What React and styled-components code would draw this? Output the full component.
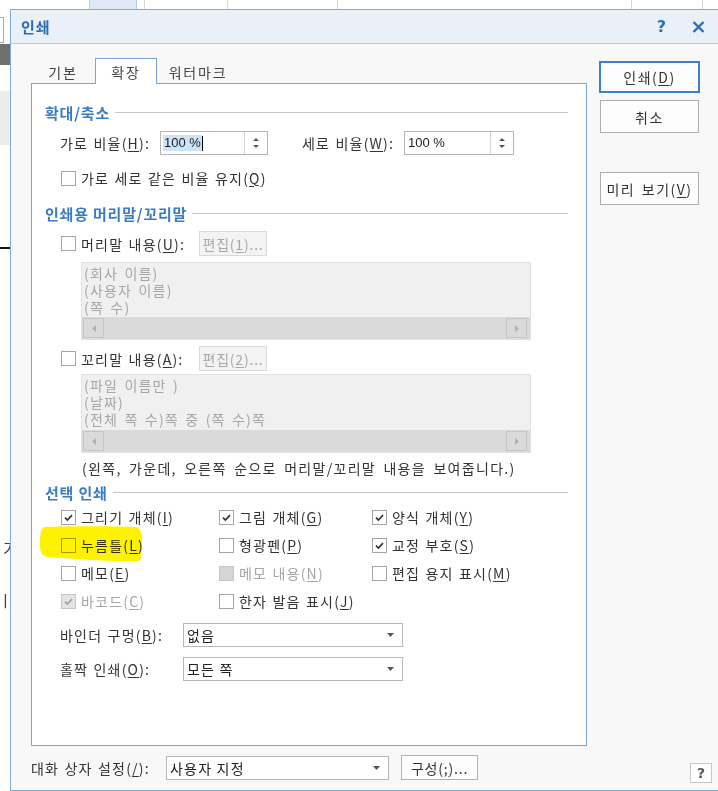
import React from 'react';
import styled, { createGlobalStyle } from 'styled-components';

const GlobalStyle = createGlobalStyle`
  html, body { margin: 0; padding: 0; background: #fff; }
  body {
    overflow: hidden;
    font-family: "Noto Sans CJK KR", "Noto Sans", sans-serif;
    color: #333;
  }
`;

const Desktop = styled.div`
  width: 718px;
  height: 791px;
  overflow: hidden;
  display: flex;
  flex-direction: column;
  background: #fff;
`;

const TopStrip = styled.div`
  height: 9px;
  flex: none;
  display: flex;
`;

const StripCell = styled.div`
  width: ${(p) => p.$w}px;
  flex: none;
  box-sizing: border-box;
  background: ${(p) => p.$bg || '#fff'};
  border-right: 1px solid ${(p) => p.$line || '#d8d8d8'};
`;

const MainRow = styled.div`
  flex: 1;
  min-height: 0;
  display: flex;
`;

const LeftStrip = styled.div`
  width: 10px;
  flex: none;
  display: flex;
  flex-direction: column;
  overflow: hidden;
`;

const StripBlock = styled.div`
  flex: none;
  height: ${(p) => p.$h}px;
  margin-top: ${(p) => p.$mt || 0}px;
  width: ${(p) => p.$w || 10}px;
  box-sizing: border-box;
  background: ${(p) => p.$bg || 'transparent'};
  border: ${(p) => (p.$frame ? '1px solid #a9a9a9' : 'none')};
  border-left: none;
`;

const StripGlyph = styled.div`
  flex: none;
  margin-top: ${(p) => p.$mt}px;
  margin-left: ${(p) => p.$ml || 0}px;
  font-size: 16px;
  line-height: 18px;
  color: #444;
  white-space: nowrap;
`;

const Dialog = styled.div`
  width: 720px;
  flex: none;
  display: flex;
  flex-direction: column;
  box-sizing: border-box;
  border: 1px solid #80aad9;
  background: #f8f8f8;
`;

const TitleBar = styled.div`
  height: 34px;
  flex: none;
  box-sizing: border-box;
  display: flex;
  align-items: center;
  padding: 0 24px 0 10px;
  background: #e9f0f8;
  border-bottom: 1px solid #b6cde8;
`;

const TitleText = styled.div`
  font-size: 15px;
  font-weight: 700;
  letter-spacing: 1px;
  color: #2d6db3;
`;

const Spacer = styled.div`
  flex: 1;
`;

const HelpMark = styled.div`
  font-family: "DejaVu Sans", sans-serif;
  font-size: 16px;
  font-weight: 700;
  color: #2d6db3;
  line-height: 16px;
`;

const CloseIcon = styled.svg`
  margin-left: 26px;
`;

const Body = styled.div`
  flex: 1;
  display: flex;
  padding: 14px 0 0 20px;
`;

const LeftCol = styled.div`
  width: 556px;
  flex: none;
  display: flex;
  flex-direction: column;
`;

const TabRow = styled.div`
  height: 26px;
  display: flex;
  margin-bottom: -1px;
  position: relative;
  z-index: 1;
`;

const Tab = styled.div`
  width: ${(p) => p.$w}px;
  height: 26px;
  box-sizing: border-box;
  display: flex;
  align-items: center;
  justify-content: center;
  font-size: 14px;
  letter-spacing: 1.8px;
  color: #444;
  border: 1px solid ${(p) => (p.$active ? '#7aa6d6' : 'transparent')};
  border-bottom: none;
  background: ${(p) => (p.$active ? '#fff' : 'transparent')};
`;

const Panel = styled.div`
  height: 663px;
  box-sizing: border-box;
  border: 1px solid #7aa6d6;
  background: #fff;
  padding: 0 18px 0 13px;
  display: flex;
  flex-direction: column;
`;

const SectionHead = styled.div`
  height: 18px;
  margin-top: ${(p) => p.$mt}px;
  display: flex;
  align-items: center;
  font-size: 15px;
  font-weight: 700;
  letter-spacing: 0.8px;
  color: #3a7cc3;
  white-space: nowrap;
`;

const Rule = styled.div`
  flex: 1;
  height: 1px;
  margin-left: 5px;
  background: #c6c6c6;
`;

const Row = styled.div`
  display: flex;
  align-items: center;
  height: ${(p) => p.$h || 20}px;
  margin-top: ${(p) => p.$mt}px;
  margin-left: ${(p) => (p.$ml === undefined ? 15 : p.$ml)}px;
`;

const Label = styled.div`
  width: ${(p) => (p.$w ? `${p.$w}px` : 'auto')};
  flex: none;
  margin-left: ${(p) => p.$ml || 0}px;
  font-size: 14px;
  letter-spacing: 1.2px;
  word-spacing: 1px;
  line-height: 18px;
  white-space: nowrap;
  color: ${(p) => (p.$disabled ? '#a6a6a6' : '#333')};
`;

const Key = styled.span`
  text-decoration: underline;
  text-underline-offset: 2px;
`;

const SpinBox = styled.div`
  width: ${(p) => p.$w}px;
  height: 24px;
  box-sizing: border-box;
  border: 1px solid #b5b5b5;
  background: #fff;
  display: flex;
  flex: none;
`;

const SpinValue = styled.div`
  flex: 1;
  display: flex;
  align-items: center;
  padding-left: 2px;
`;

const SpinText = styled.span`
  font-family: "Liberation Sans", sans-serif;
  font-size: 13px;
  line-height: 16px;
  padding: 0 1px;
  color: #222;
  background: ${(p) => (p.$selected ? '#cde3f7' : 'transparent')};
`;

const Caret = styled.span`
  width: 1px;
  height: 15px;
  background: #000;
`;

const SpinButtons = styled.div`
  width: 22px;
  border-left: 1px solid #d2d2d2;
  display: flex;
  flex-direction: column;
  align-items: center;
  justify-content: center;
  gap: 4px;
`;

const CheckRow = styled.div`
  display: flex;
  align-items: center;
  width: ${(p) => (p.$w ? `${p.$w}px` : 'auto')};
  flex: none;
  position: relative;
`;

const Box = styled.span`
  width: 15px;
  height: 15px;
  box-sizing: border-box;
  margin-left: 1px;
  margin-right: 5px;
  flex: none;
  display: flex;
  align-items: center;
  justify-content: center;
  border: 1px solid ${(p) => (p.$disabled ? '#c6c6c6' : '#a5a5a5')};
  background: ${(p) => (p.$fill ? '#d5d5d5' : p.$disabled ? '#e4e4e4' : '#fff')};
  position: relative;
  z-index: 1;
`;

const CheckText = styled(Label)`
  position: relative;
  z-index: 1;
`;

const Highlight = styled.svg`
  position: absolute;
  left: -21px;
  top: -9px;
  mix-blend-mode: multiply;
  z-index: 2;
  pointer-events: none;
`;

const SmallButton = styled.div`
  width: ${(p) => p.$w}px;
  height: 25px;
  box-sizing: border-box;
  margin-left: ${(p) => p.$ml || 0}px;
  flex: none;
  display: flex;
  align-items: center;
  justify-content: center;
  font-size: 14px;
  letter-spacing: 0.8px;
  border: 1px solid ${(p) => (p.$disabled ? '#dadada' : '#b3b3b3')};
  background: ${(p) => (p.$disabled ? '#f3f3f3' : '#fdfdfd')};
  color: ${(p) => (p.$disabled ? '#a8a8a8' : '#333')};
`;

const ListBox = styled.div`
  height: ${(p) => p.$h}px;
  width: 450px;
  margin-top: ${(p) => p.$mt}px;
  margin-left: 36px;
  box-sizing: border-box;
  border: 1px solid #e2e2e2;
  background: #f0f0f0;
  display: flex;
  flex-direction: column;
`;

const ListLines = styled.div`
  flex: 1;
  padding: 2px 0 0 2px;
  font-size: 14px;
  letter-spacing: 1.2px;
  word-spacing: 2px;
  line-height: 17px;
  color: #a6a6a6;
  overflow: hidden;
`;

const ScrollTrack = styled.div`
  height: 22px;
  flex: none;
  background: #dadada;
  display: flex;
  align-items: center;
  justify-content: space-between;
  padding: 0 3px 0 1px;
`;

const ScrollButton = styled.div`
  width: 21px;
  height: 20px;
  box-sizing: border-box;
  border: 1px solid #c6c6c6;
  display: flex;
  align-items: center;
  justify-content: center;
`;

const Note = styled.div`
  margin-top: 6px;
  margin-left: 37px;
  height: 18px;
  font-size: 14px;
  letter-spacing: 1.3px;
  word-spacing: 3px;
  line-height: 18px;
  color: #333;
  white-space: nowrap;
`;

const CheckGrid = styled.div`
  margin-top: 6px;
  margin-left: 15px;
  display: grid;
  grid-template-columns: 158px 153px auto;
  grid-auto-rows: 20px;
  row-gap: 8px;
`;

const Select = styled.div`
  width: ${(p) => p.$w}px;
  height: 24px;
  box-sizing: border-box;
  flex: none;
  border: 1px solid #b7b7b7;
  background: #fff;
  display: flex;
  align-items: center;
  justify-content: space-between;
  padding: 0 8px 0 3px;
  font-size: 14px;
  letter-spacing: 1.2px;
  color: #222;
`;

const BottomRow = styled.div`
  margin-top: 9px;
  display: flex;
  align-items: center;
  height: 25px;
`;

const RightCol = styled.div`
  width: 113px;
  margin-left: 12px;
  padding-top: 3px;
  display: flex;
  flex-direction: column;
  align-items: flex-start;
`;

const PushButton = styled.div`
  width: ${(p) => (p.$default ? 101 : 99)}px;
  height: ${(p) => (p.$default ? 32 : 33)}px;
  margin-top: ${(p) => p.$mt || 0}px;
  margin-left: ${(p) => (p.$default ? 0 : 1)}px;
  box-sizing: border-box;
  display: flex;
  align-items: center;
  justify-content: center;
  font-size: 14px;
  letter-spacing: 1.5px;
  word-spacing: 2px;
  white-space: nowrap;
  color: #333;
  background: #fdfdfd;
  border: ${(p) => (p.$default ? '2px solid #3b80cf' : '1px solid #adadad')};
`;

const HelpBox = styled.div`
  width: 22px;
  height: 20px;
  margin-top: 558px;
  margin-left: 91px;
  box-sizing: border-box;
  border: 1px solid #c6c6c6;
  background: #fff;
  display: flex;
  align-items: center;
  justify-content: center;
  font-family: "DejaVu Sans", sans-serif;
  font-size: 14px;
  font-weight: 700;
  color: #555;
`;

const Tri = ({ dir = 'down', color = '#555', w = 7, h = 4 }) => {
  const pts = {
    down: `0,0 ${w},0 ${w / 2},${h}`,
    up: `0,${h} ${w},${h} ${w / 2},0`,
    left: `${w},0 ${w},${h} 0,${h / 2}`,
    right: `0,0 0,${h} ${w},${h / 2}`,
  }[dir];
  return (
    <svg width={w} height={h} viewBox={`0 0 ${w} ${h}`}>
      <polygon points={pts} fill={color} />
    </svg>
  );
};

const Tick = ({ color }) => (
  <svg width="11" height="11" viewBox="0 0 11 11">
    <path d="M2 5.6 L4.4 8 L9 3.2" fill="none" stroke={color} strokeWidth="1.7" />
  </svg>
);

const Check = ({ state, disabled, children, w, highlight }) => (
  <CheckRow $w={w}>
    {highlight && (
      <Highlight width="104" height="36" viewBox="0 0 104 36">
        <path
          d="M5 1 C30 0 70 0 96 1 C102 2 104 8 103 16 C103 25 103 31 100 35 C70 36 40 33 10 31 C4 31 1 27 1 20 C1 12 1 3 5 1 Z"
          fill="#fff200"
        />
      </Highlight>
    )}
    <Box $disabled={disabled} $fill={state === 'filled'}>
      {state === 'checked' && <Tick color={disabled ? '#a2a2a2' : '#333'} />}
    </Box>
    <CheckText $disabled={disabled}>{children}</CheckText>
  </CheckRow>
);

const Spin = ({ w, value, selected }) => (
  <SpinBox $w={w}>
    <SpinValue>
      <SpinText $selected={selected}>{value}</SpinText>
      {selected && <Caret />}
    </SpinValue>
    <SpinButtons>
      <Tri dir="up" w={6} h={3} />
      <Tri dir="down" w={6} h={3} />
    </SpinButtons>
  </SpinBox>
);

const List = ({ lines, mt, h }) => (
  <ListBox $mt={mt} $h={h}>
    <ListLines>
      {lines.map((l) => (
        <div key={l}>{l}</div>
      ))}
    </ListLines>
    <ScrollTrack>
      <ScrollButton>
        <Tri dir="left" w={4} h={7} color="#b0b0b0" />
      </ScrollButton>
      <ScrollButton>
        <Tri dir="right" w={4} h={7} color="#b0b0b0" />
      </ScrollButton>
    </ScrollTrack>
  </ListBox>
);

const selectItems = [
  { label: '그리기 개체', key: 'I', state: 'checked' },
  { label: '그림 개체', key: 'G', state: 'checked' },
  { label: '양식 개체', key: 'Y', state: 'checked' },
  { label: '누름틀', key: 'L', state: 'off', highlight: true },
  { label: '형광펜', key: 'P', state: 'off' },
  { label: '교정 부호', key: 'S', state: 'checked' },
  { label: '메모', key: 'E', state: 'off' },
  { label: '메모 내용', key: 'N', state: 'filled', disabled: true },
  { label: '편집 용지 표시', key: 'M', state: 'off' },
  { label: '바코드', key: 'C', state: 'checked', disabled: true },
  { label: '한자 발음 표시', key: 'J', state: 'off' },
];

const stripCells = [
  { w: 90, line: '#b7cae3' },
  { w: 47, bg: '#dfe9f6', line: '#b7cae3' },
  { w: 8 },
  { w: 83 },
  { w: 110 },
  { w: 294 },
  { w: 71 },
  { w: 15, line: 'transparent' },
];

export default function App() {
  return (
    <>
      <GlobalStyle />
      <Desktop>
        <TopStrip>
          {stripCells.map((c, i) => (
            <StripCell key={i} $w={c.w} $bg={c.bg} $line={c.line} />
          ))}
        </TopStrip>
        <MainRow>
          <LeftStrip>
            <StripBlock $mt={8} $h={26} $w={4} $frame />
            <StripBlock $mt={1} $h={21} $bg="#6f6f6f" />
            <StripBlock $mt={26} $h={54} $bg="#ececec" />
            <StripBlock $mt={102} $h={2} $bg="#111" />
            <StripGlyph $mt={290} $ml={3}>가</StripGlyph>
            <StripGlyph $mt={34} $ml={-2}>ㅣ</StripGlyph>
          </LeftStrip>
          <Dialog>
            <TitleBar>
              <TitleText>인쇄</TitleText>
              <Spacer />
              <HelpMark>?</HelpMark>
              <CloseIcon width="13" height="12" viewBox="0 0 13 12">
                <path d="M1.5 1 L11.5 11 M11.5 1 L1.5 11" stroke="#2d6db3" strokeWidth="2.4" />
              </CloseIcon>
            </TitleBar>
            <Body>
              <LeftCol>
                <TabRow>
                  <Tab $w={64}>기본</Tab>
                  <Tab $w={62} $active>확장</Tab>
                  <Tab $w={82}>워터마크</Tab>
                </TabRow>
                <Panel>
                  <SectionHead $mt={19}>
                    확대/축소<Rule />
                  </SectionHead>
                  <Row $mt={10} $h={24}>
                    <Label $w={100}>
                      가로 비율(<Key>H</Key>):
                    </Label>
                    <Spin w={108} value="100 %" selected />
                    <Label $w={102} $ml={34}>
                      세로 비율(<Key>W</Key>):
                    </Label>
                    <Spin w={110} value="100 %" />
                  </Row>
                  <Row $mt={14} $h={18}>
                    <Check state="off">
                      가로 세로 같은 비율 유지(<Key>Q</Key>)
                    </Check>
                  </Row>

                  <SectionHead $mt={17}>
                    인쇄용 머리말/꼬리말<Rule />
                  </SectionHead>
                  <Row $mt={9} $h={25}>
                    <Check state="off" w={139}>
                      머리말 내용(<Key>U</Key>):
                    </Check>
                    <SmallButton $w={68} $disabled>
                      편집(<Key>1</Key>)...
                    </SmallButton>
                  </Row>
                  <List mt={6} h={78} lines={['(회사 이름)', '(사용자 이름)', '(쪽 수)']} />
                  <Row $mt={6} $h={25}>
                    <Check state="off" w={139}>
                      꼬리말 내용(<Key>A</Key>):
                    </Check>
                    <SmallButton $w={68} $disabled>
                      편집(<Key>2</Key>)...
                    </SmallButton>
                  </Row>
                  <List
                    mt={3}
                    h={79}
                    lines={['(파일 이름만 )', '(날짜)', '(전체 쪽 수)쪽 중 (쪽 수)쪽']}
                  />
                  <Note>(왼쪽, 가운데, 오른쪽 순으로 머리말/꼬리말 내용을 보여줍니다.)</Note>

                  <SectionHead $mt={6}>
                    선택 인쇄<Rule />
                  </SectionHead>
                  <CheckGrid>
                    {selectItems.map((it) => (
                      <Check
                        key={it.key}
                        state={it.state}
                        disabled={it.disabled}
                        highlight={it.highlight}
                      >
                        {it.label}(<Key>{it.key}</Key>)
                      </Check>
                    ))}
                  </CheckGrid>
                  <Row $mt={12} $h={24}>
                    <Label $w={123}>
                      바인더 구멍(<Key>B</Key>):
                    </Label>
                    <Select $w={220}>
                      없음
                      <Tri />
                    </Select>
                  </Row>
                  <Row $mt={10} $h={24}>
                    <Label $w={123}>
                      홀짝 인쇄(<Key>O</Key>):
                    </Label>
                    <Select $w={220}>
                      모든 쪽
                      <Tri />
                    </Select>
                  </Row>
                </Panel>
                <BottomRow>
                  <Label $w={135}>
                    대화 상자 설정(<Key>/</Key>):
                  </Label>
                  <Select $w={223}>
                    사용자 지정
                    <Tri />
                  </Select>
                  <SmallButton $w={77} $ml={12}>
                    구성(<Key>;</Key>)...
                  </SmallButton>
                </BottomRow>
              </LeftCol>
              <RightCol>
                <PushButton $default>
                  인쇄(<Key>D</Key>)
                </PushButton>
                <PushButton $mt={7}>취소</PushButton>
                <PushButton $mt={39}>
                  미리 보기(<Key>V</Key>)
                </PushButton>
                <HelpBox>?</HelpBox>
              </RightCol>
            </Body>
          </Dialog>
        </MainRow>
      </Desktop>
    </>
  );
}
